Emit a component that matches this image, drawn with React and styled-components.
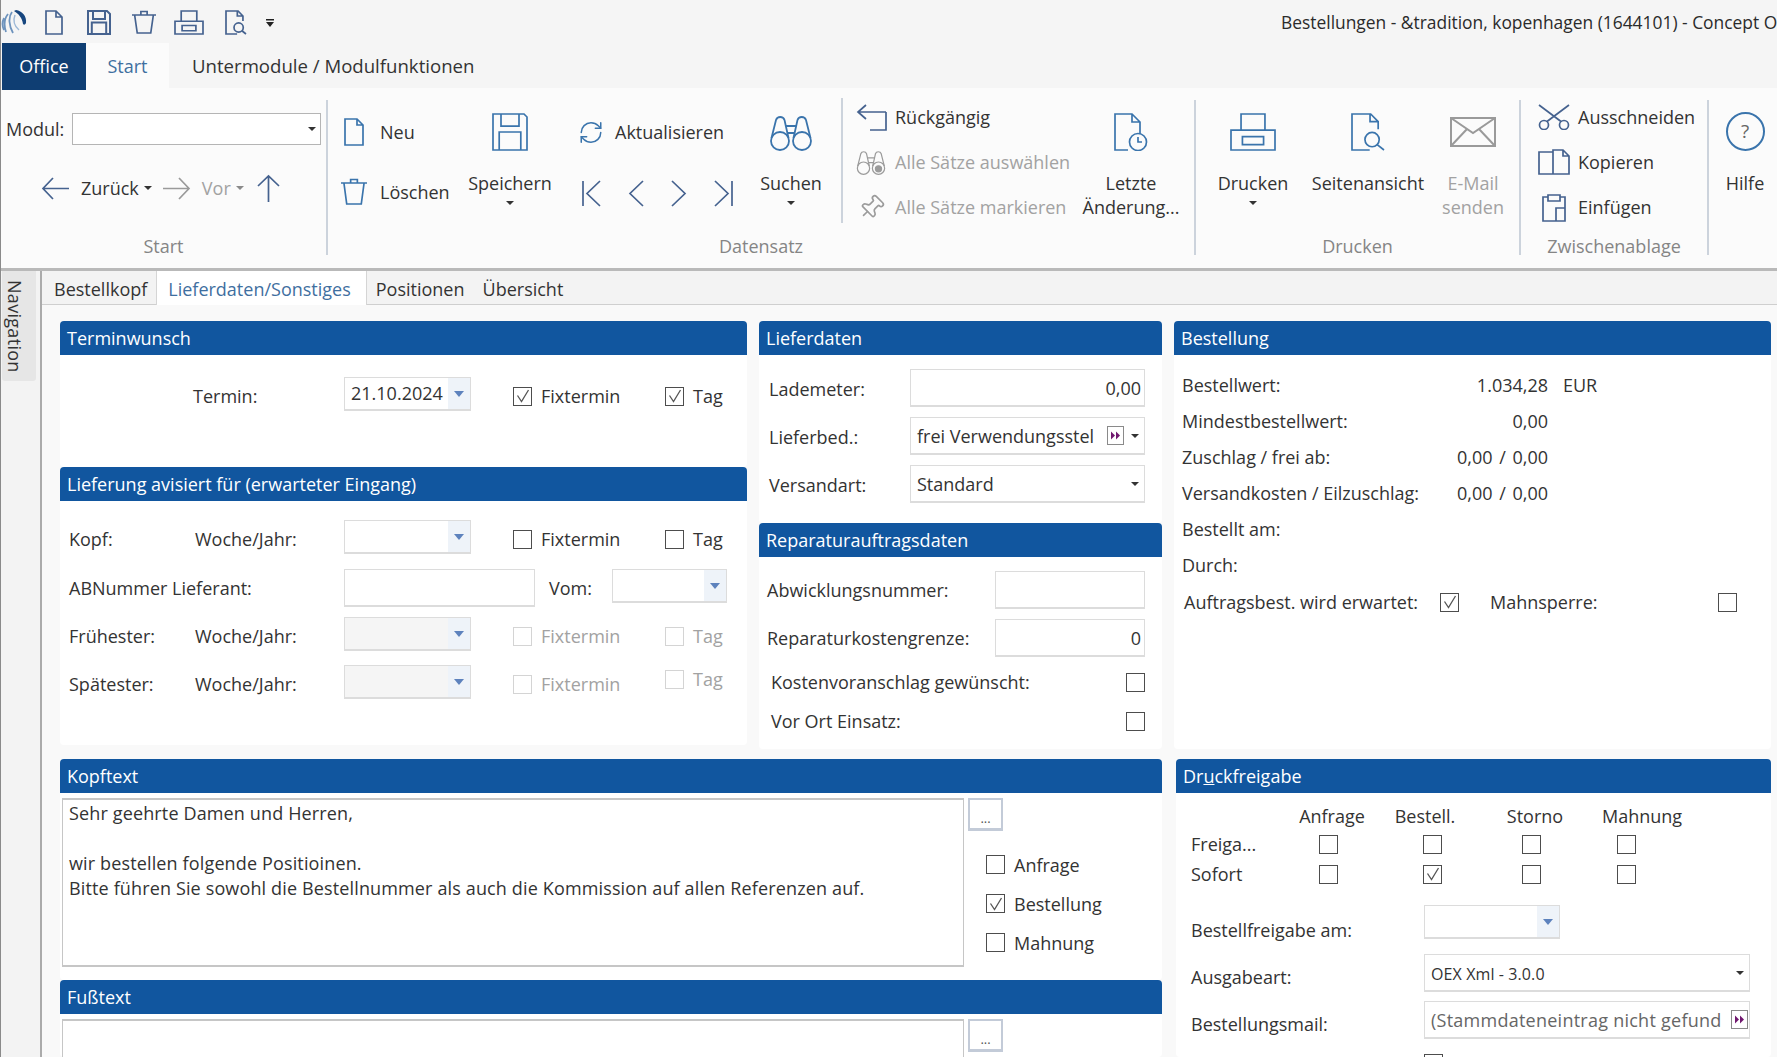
import React from 'react'
import styled, { createGlobalStyle } from 'styled-components'
import { RefreshCw, Pin } from 'lucide-react'

const BLUE = '#3a74ac'
const NAVY = '#45628f'
const GRAY = '#a2a2a2'

const Global = createGlobalStyle`
  html, body { margin: 0; padding: 0; background: #f9f9f9; overflow: hidden; }
  * { box-sizing: border-box; }
  body { font-family: "Open Sans", "Noto Sans", sans-serif; font-size: 18px; color: #333; }
`

const Screen = styled.div`
  width: 1777px;
  height: 1057px;
  overflow: hidden;
  display: flex;
  flex-direction: column;
  border-left: 1px solid #8a8a8a;
  background: #f9f9f9;
`

/* title + quick access */
const TitleBar = styled.div`
  height: 43px;
  flex: none;
  display: flex;
  background: #f5f5f5;
`
const QuickBar = styled.div`
  width: 1280px;
  flex: none;
  height: 43px;
`
const QuickIcons = styled.div`
  display: flex;
  align-items: center;
  height: 35px;
  padding-top: 10px;
  svg { display: block; flex: none; }
`
const Title = styled.div`
  flex: 1;
  white-space: nowrap;
  overflow: hidden;
  line-height: 44px;
  font-size: 17.4px;
  color: #2b2b2b;
`
const Slot = styled.span`
  display: block;
  flex: none;
  width: ${p => p.$w}px;
`

const TabStrip = styled.div`
  height: 45px;
  flex: none;
  display: flex;
  background: #f5f5f5;
`
const OfficeTab = styled.div`
  width: 84px;
  height: 47px;
  margin-left: 1px;
  position: relative;
  z-index: 1;
  background: #0f3e73;
  color: #fff;
  text-align: center;
  line-height: 46px;
`
const StartTab = styled.div`
  width: 83px;
  background: #fbfbfb;
  color: #3f6f9f;
  text-align: center;
  line-height: 46px;
`
const ModuleTab = styled.div`
  margin-left: 23px;
  line-height: 46px;
  font-size: 18.6px;
`

/* ribbon */
const Ribbon = styled.div`
  height: 183px;
  flex: none;
  display: flex;
  background: #fbfbfb;
  border-bottom: 3px solid #b9b9b9;
`
const Group = styled.div`
  width: ${p => p.$w}px;
  flex: none;
  display: flex;
  flex-direction: column;
`
const GroupBody = styled.div`
  height: 143px;
  display: flex;
`
const GroupLabel = styled.div`
  height: 30px;
  line-height: 30px;
  text-align: center;
  color: #858585;
`
const Sep = styled.div`
  width: 2px;
  flex: none;
  height: ${p => p.$h || 155}px;
  margin: ${p => p.$top || 12}px ${p => p.$right || 0}px 0 ${p => p.$left || 0}px;
  background: #ccd3dc;
`
const StartStack = styled.div`
  width: 100%;
  display: flex;
  flex-direction: column;
`
const ModulRow = styled.div`
  display: flex;
  align-items: center;
  margin-top: 25px;
  padding-left: 5px;
  height: 32px;
`
const ModulLabel = styled.span`
  width: 66px;
  overflow: hidden;
  white-space: nowrap;
`
const ModulInput = styled.div`
  width: 249px;
  height: 32px;
  background: #fff;
  border: 1px solid #b5b5b5;
  display: flex;
  align-items: center;
  justify-content: flex-end;
  padding-right: 4px;
`
const NavRow = styled.div`
  display: flex;
  align-items: center;
  height: 30px;
  margin-top: 28px;
  padding-left: 40px;
  svg { flex: none; display: block; }
`
const NavText = styled.span`
  color: ${p => (p.$off ? GRAY : '#333')};
  margin: 0 5px 0 ${p => p.$left}px;
`
const Caret = styled.span`
  display: inline-block;
  flex: none;
  width: 0;
  height: 0;
  border-left: 4px solid transparent;
  border-right: 4px solid transparent;
  border-top: 4px solid ${p => (p.$off ? '#8a8a8a' : '#333')};
  margin-right: ${p => p.$right || 0}px;
`
const Col = styled.div`
  width: ${p => p.$w}px;
  flex: none;
  display: flex;
  flex-direction: column;
  padding: ${p => p.$top || 0}px 0 0 ${p => p.$left || 0}px;
  gap: ${p => p.$gap || 0}px;
`
const SmallBtn = styled.div`
  height: 30px;
  padding-bottom: 2px;
  display: flex;
  align-items: center;
  white-space: nowrap;
  color: ${p => (p.$off ? GRAY : '#333')};
`
const IconSlot = styled.span`
  width: ${p => p.$w}px;
  flex: none;
  display: flex;
  justify-content: center;
  margin-right: ${p => p.$gap}px;
  svg { display: block; }
`
const PagerRow = styled.div`
  height: 30px;
  display: flex;
  align-items: center;
  gap: 27px;
  padding-left: 4px;
  svg { display: block; flex: none; }
`
const LargeBtn = styled.div`
  width: ${p => p.$w || 80}px;
  flex: none;
  margin-left: ${p => p.$left || 0}px;
  padding-top: 25px;
  display: flex;
  flex-direction: column;
  align-items: center;
  line-height: 24px;
  text-align: center;
  white-space: nowrap;
  color: ${p => (p.$off ? GRAY : '#333')};
`
const LargeIcon = styled.div`
  height: 37px;
  margin-bottom: 21px;
  display: flex;
  align-items: center;
  svg { display: block; }
`
const BtnCaret = styled(Caret)`
  margin-top: 6px;
`
const HelpCircle = styled.div`
  width: 39px;
  height: 39px;
  border-radius: 50%;
  border: 2px solid ${BLUE};
  color: #666;
  font-size: 19px;
  line-height: 34px;
  text-align: center;
`

/* main area */
const Main = styled.div`
  flex: 1;
  min-height: 0;
  display: flex;
`
const NavStrip = styled.div`
  width: 41px;
  flex: none;
  background: #f3f3f3;
  border-right: 2px solid #ababab;
  padding-left: 1px;
`
const NavTab = styled.div`
  width: 34px;
  height: 110px;
  background: #e6e6e6;
  border-radius: 0 0 3px 3px;
  writing-mode: vertical-rl;
  text-align: center;
  padding-right: 8px;
  line-height: 26px;
  font-size: 18px;
  letter-spacing: 0.3px;
  color: #333;
`
const Content = styled.div`
  flex: 1;
  min-width: 0;
  display: flex;
  flex-direction: column;
`
const PageTabs = styled.div`
  height: 34px;
  flex: none;
  display: flex;
  background: #f3f3f3;
  border-bottom: 1px solid #cfcfcf;
  padding-left: 3px;
`
const PageTab = styled.div`
  line-height: 36px;
  padding: 0 ${p => p.$padRight || 8}px 0 ${p => p.$pad || 8}px;
  color: ${p => (p.$active ? '#3f6f9f' : '#333')};
  background: ${p => (p.$active ? '#fff' : 'transparent')};
  height: ${p => (p.$active ? 34 : 33)}px;
  border-left: 1px solid ${p => (p.$active ? '#d5d5d5' : 'transparent')};
  border-right: 1px solid ${p => (p.$active ? '#d5d5d5' : 'transparent')};
`
const Page = styled.div`
  flex: 1;
  min-height: 0;
  padding: 16px 0 0 18px;
`
const TopRow = styled.div`
  height: 438px;
  display: flex;
  gap: 12px;
`
const Stack = styled.div`
  width: ${p => p.$w}px;
  flex: none;
`
const Panel = styled.div`
  background: #fff;
  border-radius: 4px;
  height: ${p => p.$h}px;
  margin-bottom: ${p => p.$bottom || 0}px;
`
const Head = styled.div`
  height: 34px;
  background: #11569f;
  border-radius: 4px 4px 0 0;
  color: #fff;
  line-height: 34px;
  padding-left: 7px;
  font-size: 18px;
`
const Body = styled.div`
  padding: ${p => p.$top || 0}px 0 0 ${p => p.$left || 0}px;
  display: flex;
  flex-direction: column;
`

const DateRow = styled.div`
  display: flex;
  align-items: center;
  height: ${p => p.$h || 34}px;
  margin-top: ${p => p.$top || 0}px;
`
const RowLabel = styled.span`
  width: ${p => p.$w}px;
  flex: none;
  white-space: nowrap;
  position: relative;
  top: ${p => p.$shift ?? 2}px;
  margin-left: ${p => p.$left || 0}px;
`
const Combo = styled.div`
  width: ${p => p.$w || 127}px;
  height: 34px;
  flex: none;
  align-self: ${p => (p.$top ? 'flex-start' : 'auto')};
  display: flex;
  justify-content: space-between;
  border: 1px solid #dcdcdc;
  border-bottom-width: 2px;
  background: ${p => (p.$off ? '#f5f5f5' : '#fff')};
  line-height: 30px;
  padding-left: 6px;
`
const ComboBtn = styled.span`
  width: 22px;
  background: #eef3f9;
  display: flex;
  align-items: center;
  justify-content: center;
  &::after {
    content: '';
    border-left: 5px solid transparent;
    border-right: 5px solid transparent;
    border-top: 6px solid #5d82bd;
  }
`
const CheckWrap = styled.label`
  display: flex;
  align-items: center;
  flex: none;
  height: 19px;
  width: ${p => p.$w || 'auto'};
  margin-left: ${p => p.$left || 0}px;
  position: relative;
  top: ${p => p.$shift ?? 2}px;
  color: ${p => (p.$off ? GRAY : '#333')};
`
const Box = styled.span`
  width: 19px;
  height: 19px;
  flex: none;
  display: flex;
  align-items: center;
  justify-content: center;
  background: #fff;
  border: 1.5px solid ${p => (p.$off ? '#d4d4d4' : '#4d4d4d')};
  margin-right: ${p => (p.$gap === undefined ? 9 : p.$gap)}px;
  svg { display: block; }
`
const Field = styled.div`
  width: ${p => p.$w}px;
  height: ${p => p.$h || 38}px;
  flex: none;
  display: flex;
  align-items: center;
  justify-content: ${p => (p.$right ? 'flex-end' : 'space-between')};
  border: 1px solid #dcdcdc;
  border-bottom-width: 2px;
  background: #fff;
  padding: 0 ${p => (p.$right ? 3 : p.$tight ? 1 : 5)}px 0 ${p => (p.$right ? 0 : 6)}px;
  white-space: nowrap;
  overflow: hidden;
  letter-spacing: ${p => (p.$tight ? 0.25 : 0)}px;
  color: ${p => (p.$muted ? '#666' : '#333')};
`
const FieldEnd = styled.span`
  display: flex;
  align-items: center;
  flex: none;
  gap: 7px;
  svg { display: block; }
`
const ExportValue = styled.span`
  font-size: 16px;
  letter-spacing: 0.1px;
  position: relative;
  top: 1px;
`
const FormRow = styled.div`
  display: flex;
  align-items: center;
  height: ${p => p.$h || 38}px;
  margin-top: ${p => p.$top || 0}px;
`
const FormLabel = styled.span`
  width: ${p => p.$w}px;
  flex: none;
  white-space: nowrap;
  position: relative;
  top: ${p => p.$shift || 0}px;
  padding-left: ${p => p.$pad || 0}px;
  margin-left: ${p => p.$left || 0}px;
`
const OrderRow = styled.div`
  display: grid;
  grid-template-columns: 240px 126px auto;
  height: 36px;
  line-height: 36px;
  padding-left: 8px;
  white-space: nowrap;
`
const OrderValue = styled.span`
  text-align: right;
  word-spacing: 2px;
`
const Currency = styled.span`
  margin-left: 15px;
`
const FlagRow = styled.div`
  display: flex;
  align-items: center;
  height: 38px;
  padding-left: 10px;
  white-space: nowrap;
`

const BottomRow = styled.div`
  display: flex;
  gap: 14px;
`
const TextBlock = styled.div`
  display: flex;
  padding: 5px 0 0 2px;
  height: ${p => p.$h}px;
`
const TextBox = styled.div`
  width: 902px;
  height: ${p => p.$h}px;
  flex: none;
  background: #fff;
  border: 1px solid #c6c6c6;
  border-top-width: 2px;
  border-bottom-width: 2px;
  padding: 1px 6px;
  line-height: 25px;
  letter-spacing: 0.14px;
  white-space: pre-line;
`
const SideCol = styled.div`
  margin-left: 4px;
  display: flex;
  flex-direction: column;
`
const DotsBtn = styled.div`
  width: 35px;
  height: 33px;
  background: #fff;
  border: 2px solid #c3cbd8;
  border-bottom-width: 3px;
  font-size: 13px;
  line-height: 36px;
  text-align: center;
  color: #555;
`
const SideChecks = styled.div`
  display: flex;
  flex-direction: column;
  gap: 20px;
  padding: 24px 0 0 18px;
`
const ReleaseHead = styled.div`
  display: grid;
  grid-template-columns: 94px 92px 128px 86px;
  height: 26px;
  margin: 10px 0 0 109px;
  line-height: 26px;
  text-align: center;
`
const ReleaseRow = styled.div`
  display: grid;
  grid-template-columns: 128px 104px 99px 95px 20px;
  align-items: center;
  height: 30px;
  padding-left: 15px;
`
const ReleaseForm = styled.div`
  padding: 16px 0 0 15px;
`

const Check = () => (
  <svg width="14" height="14" viewBox="0 0 14 14" fill="none" stroke="#555" strokeWidth="1.3"><path d="M1.500 6.500l4 6L12.500 1" /></svg>
)
const CheckBox = ({ on, off, children, w, left, shift, gap }) => (
  <CheckWrap $w={w} $left={left} $shift={shift} $off={off}>
    <Box $off={off} $gap={children ? gap : 0}>{on && <Check />}</Box>
    {children}
  </CheckWrap>
)

const Ico = ({ w, h, c = BLUE, sw = 1.7, children }) => (
  <svg width={w} height={h} viewBox={`0 0 ${w} ${h}`} fill="none" stroke={c} strokeWidth={sw}>{children}</svg>
)
const Logo = () => (
  <svg width="27" height="27" viewBox="0 0 27 27" fill="none">
    <path d="M15 1c6 1 11 6 10 13-1 2-2 2-3 1-1-6-4-10-9-13z" fill="#17467f" />
    <path d="M11 3c-4 5-3 14 1 21M7 5c-4 5-4 12-2 18M3 9c-2 4-2 8 0 12" stroke="#6d93bd" strokeWidth="1.8" />
    <path d="M14 6c-2 5-1 11 4 15" stroke="#9db8d6" strokeWidth="1.500" />
  </svg>
)
const DocIco = ({ w = 20, h = 28, c = BLUE, sw }) => (
  <Ico w={w} h={h} c={c} sw={sw}><path d={`M1 1h${w - 8}l6 6v${h - 8}H1z M${w - 7} 1v6h6`} /></Ico>
)
const SaveIco = ({ w = 36, h = 38, c = BLUE, sw }) => (
  <Ico w={w} h={h} c={c} sw={sw}><path d={`M1 1h${w - 5}l3 3v${h - 5}H1z M${w * 0.25} 1v${h * 0.32}h${w * 0.5}V1 M${w * 0.2} ${h - 1}V${h * 0.5}h${w * 0.6}V${h - 1}`} /></Ico>
)
const TrashIco = ({ w = 28, h = 28, c = BLUE, sw }) => (
  <Ico w={w} h={h} c={c} sw={sw}><path d={`M1 5h${w - 2} M${w * 0.14} 5l${w * 0.1} ${h - 7}h${w * 0.52}l${w * 0.1} ${-(h - 7)} M${w * 0.38} 5V1.500h${w * 0.24}V5`} /></Ico>
)
const PrintIco = ({ w = 46, h = 38, c = BLUE, sw }) => (
  <Ico w={w} h={h} c={c} sw={sw}><path d={`M${w * 0.24} ${h * 0.45}V1h${w * 0.52}v${h * 0.45 - 1} M1 ${h * 0.45}h${w - 2}v${h * 0.55 - 1}H1z M${w * 0.27} ${h * 0.62}h${w * 0.46}v${h * 0.21}h${-w * 0.46}z`} /></Ico>
)
const PreviewIco = ({ w = 34, h = 38, c = BLUE, sw }) => (
  <Ico w={w} h={h} c={c} sw={sw}>
    <path d={`M${w * 0.55} ${h - 1}H1V1h${w * 0.55}l${w * 0.22} ${h * 0.2}v${h * 0.2} M${w * 0.56} 1v${h * 0.2}h${w * 0.22}`} />
    <circle cx={w * 0.62} cy={h * 0.7} r={w * 0.21} />
    <path d={`M${w * 0.77} ${h * 0.83}L${w - 1} ${h - 1}`} />
  </Ico>
)
const BinocularIco = ({ w = 44, h = 38, c = BLUE, badge }) => (
  <svg width={w} height={h} viewBox="0 0 44 38" fill="none" stroke={c} strokeWidth={1.8}>
    <circle cx="11" cy="28" r="9" />
    <circle cx="33" cy="28" r="9" />
    <path d="M2.500 25L7 7a4.500 4.500 0 0 1 8.500 0L19.500 25 M24.500 25l4-18a4.500 4.500 0 0 1 8.500 0l4.500 18 M17 13h10 M19 20h6" />
    {badge && <circle cx="33" cy="29" r="4.500" fill={c} />}
  </svg>
)
const ClockDocIco = () => (
  <Ico w={34} h={38}>
    <path d="M14 37H1V1h17l8 8v12 M18 1v8h8" />
    <circle cx="24" cy="29" r="8.500" />
    <path d="M24 24v5h4" />
  </Ico>
)
const MailIco = () => (
  <Ico w={46} h={30} c="#9a9a9a" sw={2}><path d="M1 1h44v28H1z M1 1l22 15L45 1 M1 29l16-17 M45 29L29 12" /></Ico>
)
const UndoIco = () => (
  <Ico w={31} h={27} c={NAVY}><path d="M30 8H2 M10 1L2 8l8 7 M30 8v18H14" /></Ico>
)
const ScissorsIco = () => (
  <Ico w={32} h={26} c={NAVY}>
    <circle cx="6" cy="21" r="4.500" /><circle cx="26" cy="21" r="4.500" />
    <path d="M9 17.500L31 1 M23 17.500L1 1" />
  </Ico>
)
const CopyIco = () => (
  <Ico w={32} h={26} c={NAVY}><path d="M15 3H1v22h14 M15 1h10l6 6v18H15z M25 1v6h6" /></Ico>
)
const PasteIco = () => (
  <Ico w={25} h={29} c={NAVY}><path d="M6 4H1v24h13 M18 4h5v11 M6 2h12v6H6z M14 15h9v13h-9z" /></Ico>
)
const ArrowLeft = ({ c = NAVY }) => (
  <Ico w={29} h={25} c={c}><path d="M28 12.500H2 M12 2L2 12.500 12 23" /></Ico>
)
const ArrowRight = () => (
  <Ico w={29} h={25} c="#9a9a9a"><path d="M1 12.500h26 M17 2l10 10.500L17 23" /></Ico>
)
const ArrowUp = () => (
  <Ico w={25} h={29} c={NAVY}><path d="M12.500 28V2 M2 12L12.500 2 23 12" /></Ico>
)
const First = () => <Ico w={19} h={27} c={NAVY}><path d="M1 1v25 M18 1L5 13.500 18 26" /></Ico>
const Prev = () => <Ico w={16} h={27} c={NAVY}><path d="M15 1L2 13.500 15 26" /></Ico>
const Next = () => <Ico w={16} h={27} c={NAVY}><path d="M1 1l13 12.500L1 26" /></Ico>
const Last = () => <Ico w={19} h={27} c={NAVY}><path d="M1 1l13 12.500L1 26 M18 1v25" /></Ico>
const LookupBtn = () => (
  <svg width="17" height="19" viewBox="0 0 17 19">
    <rect x="0.500" y="0.500" width="16" height="18" fill="#fff" stroke="#8a8a8a" />
    <path d="M4 5.500l4 4-4 4z M9 5.500l4 4-4 4z" fill="#70186f" />
  </svg>
)
const OverflowMark = () => (
  <svg width="10" height="10" viewBox="0 0 10 10"><path d="M1 1h8v1.500H1z M1 4h8L5 9z" fill="#222" /></svg>
)

export default function App() {
  return (
    <Screen>
      <Global />
      <TitleBar>
        <QuickBar>
          <QuickIcons>
            <Logo />
            <Slot $w={17} />
            <DocIco w={18} h={25} c={NAVY} />
            <Slot $w={24} />
            <SaveIco w={24} h={25} c={NAVY} sw={2} />
            <Slot $w={20} />
            <TrashIco w={26} h={25} c={NAVY} />
            <Slot $w={17} />
            <PrintIco w={30} h={25} c={NAVY} />
            <Slot $w={21} />
            <PreviewIco w={22} h={25} c={NAVY} />
            <Slot $w={18} />
            <OverflowMark />
          </QuickIcons>
        </QuickBar>
        <Title>Bestellungen - &amp;tradition, kopenhagen (1644101) - Concept Office</Title>
      </TitleBar>
      <TabStrip>
        <OfficeTab>Office</OfficeTab>
        <StartTab>Start</StartTab>
        <ModuleTab>Untermodule / Modulfunktionen</ModuleTab>
      </TabStrip>
      <Ribbon>
        <Group $w={325}>
          <GroupBody>
            <StartStack>
              <ModulRow>
                <ModulLabel>Modul:</ModulLabel>
                <ModulInput><Caret /></ModulInput>
              </ModulRow>
              <NavRow>
                <ArrowLeft />
                <NavText $left={11}>Zurück</NavText>
                <Caret $right={10} />
                <ArrowRight />
                <NavText $left={11} $off>Vor</NavText>
                <Caret $off $right={12} />
                <ArrowUp />
              </NavRow>
            </StartStack>
          </GroupBody>
          <GroupLabel>Start</GroupLabel>
        </Group>
        <Sep />
        <Group $w={866}>
          <GroupBody>
            <Col $w={142} $top={30} $left={12} $gap={30}>
              <SmallBtn><IconSlot $w={28} $gap={12}><DocIco /></IconSlot>Neu</SmallBtn>
              <SmallBtn><IconSlot $w={28} $gap={12}><TrashIco /></IconSlot>Löschen</SmallBtn>
            </Col>
            <LargeBtn>
              <LargeIcon><SaveIco /></LargeIcon>
              Speichern
              <BtnCaret />
            </LargeBtn>
            <Col $w={201} $top={30} $left={28} $gap={30}>
              <SmallBtn>
                <IconSlot $w={26} $gap={11}><RefreshCw size={27} color={BLUE} strokeWidth={1.4} /></IconSlot>
                Aktualisieren
              </SmallBtn>
              <PagerRow><First /><Prev /><Next /><Last /></PagerRow>
            </Col>
            <LargeBtn>
              <LargeIcon><BinocularIco /></LargeIcon>
              Suchen
              <BtnCaret />
            </LargeBtn>
            <Sep $top={10} $h={125} $left={10} />
            <Col $w={247} $top={15} $left={12} $gap={15}>
              <SmallBtn><IconSlot $w={32} $gap={8}><UndoIco /></IconSlot>Rückgängig</SmallBtn>
              <SmallBtn $off><IconSlot $w={32} $gap={8}><BinocularIco w={30} h={26} c="#9b9b9b" badge /></IconSlot>Alle Sätze auswählen</SmallBtn>
              <SmallBtn $off><IconSlot $w={32} $gap={8}><Pin size={27} color="#9b9b9b" strokeWidth={1.5} style={{ transform: 'rotate(45deg)' }} /></IconSlot>Alle Sätze markieren</SmallBtn>
            </Col>
            <LargeBtn $w={82}>
              <LargeIcon><ClockDocIco /></LargeIcon>
              Letzte
              <br />
              Änderung...
            </LargeBtn>
          </GroupBody>
          <GroupLabel>Datensatz</GroupLabel>
        </Group>
        <Sep />
        <Group $w={323}>
          <GroupBody>
            <LargeBtn $left={17}>
              <LargeIcon><PrintIco /></LargeIcon>
              Drucken
              <BtnCaret />
            </LargeBtn>
            <LargeBtn $w={110} $left={20}>
              <LargeIcon><PreviewIco /></LargeIcon>
              Seitenansicht
            </LargeBtn>
            <LargeBtn $left={10} $off>
              <LargeIcon><MailIco /></LargeIcon>
              E-Mail
              <br />
              senden
            </LargeBtn>
          </GroupBody>
          <GroupLabel>Drucken</GroupLabel>
        </Group>
        <Sep />
        <Group $w={186}>
          <GroupBody>
            <Col $w={186} $top={15} $left={17} $gap={15}>
              <SmallBtn><IconSlot $w={32} $gap={8}><ScissorsIco /></IconSlot>Ausschneiden</SmallBtn>
              <SmallBtn><IconSlot $w={32} $gap={8}><CopyIco /></IconSlot>Kopieren</SmallBtn>
              <SmallBtn><IconSlot $w={32} $gap={8}><PasteIco /></IconSlot>Einfügen</SmallBtn>
            </Col>
          </GroupBody>
          <GroupLabel>Zwischenablage</GroupLabel>
        </Group>
        <Sep />
        <LargeBtn $w={72}>
          <LargeIcon><HelpCircle>?</HelpCircle></LargeIcon>
          Hilfe
        </LargeBtn>
      </Ribbon>
      <Main>
        <NavStrip><NavTab>Navigation</NavTab></NavStrip>
        <Content>
          <PageTabs>
            <PageTab>Bestellkopf</PageTab>
            <PageTab $active $pad={11} $padRight={15}>Lieferdaten/Sonstiges</PageTab>
            <PageTab>Positionen</PageTab>
            <PageTab>Übersicht</PageTab>
          </PageTabs>
          <Page>
            <TopRow>
              <Stack $w={687}>
                <Panel $h={146}>
                  <Head>Terminwunsch</Head>
                  <Body $top={22} $left={133}>
                    <DateRow>
                      <RowLabel $w={151}>Termin:</RowLabel>
                      <Combo>21.10.2024<ComboBtn /></Combo>
                      <CheckBox on left={42} w="152px">Fixtermin</CheckBox>
                      <CheckBox on>Tag</CheckBox>
                    </DateRow>
                  </Body>
                </Panel>
                <Panel $h={278}>
                  <Head>Lieferung avisiert für (erwarteter Eingang)</Head>
                  <Body $top={19} $left={9}>
                    <DateRow>
                      <RowLabel $w={126}>Kopf:</RowLabel>
                      <RowLabel $w={149}>Woche/Jahr:</RowLabel>
                      <Combo><span /><ComboBtn /></Combo>
                      <CheckBox left={42} w="152px">Fixtermin</CheckBox>
                      <CheckBox>Tag</CheckBox>
                    </DateRow>
                    <DateRow $h={38} $top={15}>
                      <RowLabel $w={275} $shift={0}>ABNummer Lieferant:</RowLabel>
                      <Field $w={191} />
                      <RowLabel $w={63} $shift={0} $left={14}>Vom:</RowLabel>
                      <Combo $w={115} $top><span /><ComboBtn /></Combo>
                    </DateRow>
                    <DateRow $top={10}>
                      <RowLabel $w={126}>Frühester:</RowLabel>
                      <RowLabel $w={149}>Woche/Jahr:</RowLabel>
                      <Combo $off><span /><ComboBtn /></Combo>
                      <CheckBox off left={42} w="152px">Fixtermin</CheckBox>
                      <CheckBox off>Tag</CheckBox>
                    </DateRow>
                    <DateRow $top={14}>
                      <RowLabel $w={126}>Spätester:</RowLabel>
                      <RowLabel $w={149}>Woche/Jahr:</RowLabel>
                      <Combo $off><span /><ComboBtn /></Combo>
                      <CheckBox off left={42} w="152px">Fixtermin</CheckBox>
                      <CheckBox off shift={-3}>Tag</CheckBox>
                    </DateRow>
                  </Body>
                </Panel>
              </Stack>
              <Stack $w={403}>
                <Panel $h={202}>
                  <Head>Lieferdaten</Head>
                  <Body $top={14} $left={10}>
                    <FormRow>
                      <FormLabel $w={141} $shift={1}>Lademeter:</FormLabel>
                      <Field $w={235} $right>0,00</Field>
                    </FormRow>
                    <FormRow $top={10}>
                      <FormLabel $w={141} $shift={1}>Lieferbed.:</FormLabel>
                      <Field $w={235}>
                        frei Verwendungsstel
                        <FieldEnd><LookupBtn /><Caret /></FieldEnd>
                      </Field>
                    </FormRow>
                    <FormRow $top={10}>
                      <FormLabel $w={141} $shift={1}>Versandart:</FormLabel>
                      <Field $w={235}>Standard<FieldEnd><Caret /></FieldEnd></Field>
                    </FormRow>
                  </Body>
                </Panel>
                <Panel $h={226}>
                  <Head>Reparaturauftragsdaten</Head>
                  <Body $top={14} $left={8}>
                    <FormRow>
                      <FormLabel $w={228}>Abwicklungsnummer:</FormLabel>
                      <Field $w={150} />
                    </FormRow>
                    <FormRow $top={10}>
                      <FormLabel $w={228}>Reparaturkostengrenze:</FormLabel>
                      <Field $w={150} $right>0</Field>
                    </FormRow>
                    <FormRow $h={30} $top={10}>
                      <FormLabel $w={359} $pad={4}>Kostenvoranschlag gewünscht:</FormLabel>
                      <CheckBox shift={0} />
                    </FormRow>
                    <FormRow $h={30} $top={9}>
                      <FormLabel $w={359} $pad={4}>Vor Ort Einsatz:</FormLabel>
                      <CheckBox shift={0} />
                    </FormRow>
                  </Body>
                </Panel>
              </Stack>
              <Stack $w={597}>
                <Panel $h={428}>
                  <Head>Bestellung</Head>
                  <Body $top={12}>
                    <OrderRow><span>Bestellwert:</span><OrderValue>1.034,28</OrderValue><Currency>EUR</Currency></OrderRow>
                    <OrderRow><span>Mindestbestellwert:</span><OrderValue>0,00</OrderValue></OrderRow>
                    <OrderRow><span>Zuschlag / frei ab:</span><OrderValue>0,00 / 0,00</OrderValue></OrderRow>
                    <OrderRow><span>Versandkosten / Eilzuschlag:</span><OrderValue>0,00 / 0,00</OrderValue></OrderRow>
                    <OrderRow><span>Bestellt am:</span></OrderRow>
                    <OrderRow><span>Durch:</span></OrderRow>
                    <FlagRow>
                      <FormLabel $w={256}>Auftragsbest. wird erwartet:</FormLabel>
                      <CheckBox on shift={0} />
                      <FormLabel $w={228} $left={31}>Mahnsperre:</FormLabel>
                      <CheckBox shift={0} />
                    </FlagRow>
                  </Body>
                </Panel>
              </Stack>
            </TopRow>
            <BottomRow>
              <Stack $w={1102}>
                <Panel $h={221}>
                  <Head>Kopftext</Head>
                  <TextBlock $h={187}>
                    <TextBox $h={169}>{'Sehr geehrte Damen und Herren,\n\nwir bestellen folgende Positioinen.\nBitte führen Sie sowohl die Bestellnummer als auch die Kommission auf allen Referenzen auf.'}</TextBox>
                    <SideCol>
                      <DotsBtn>...</DotsBtn>
                      <SideChecks>
                        <CheckBox shift={0}>Anfrage</CheckBox>
                        <CheckBox on shift={0}>Bestellung</CheckBox>
                        <CheckBox shift={0}>Mahnung</CheckBox>
                      </SideChecks>
                    </SideCol>
                  </TextBlock>
                </Panel>
                <Panel $h={77}>
                  <Head>Fußtext</Head>
                  <TextBlock $h={43}>
                    <TextBox $h={60} />
                    <SideCol><DotsBtn>...</DotsBtn></SideCol>
                  </TextBlock>
                </Panel>
              </Stack>
              <Stack $w={595}>
                <Panel $h={298}>
                  <Head>Dr<u>u</u>ckfreigabe</Head>
                  <ReleaseHead>
                    <span>Anfrage</span>
                    <span>Bestell.</span>
                    <span>Storno</span>
                    <span>Mahnung</span>
                  </ReleaseHead>
                  <ReleaseRow>
                    <span>Freiga...</span>
                    <CheckBox shift={0} /><CheckBox shift={0} /><CheckBox shift={0} /><CheckBox shift={0} />
                  </ReleaseRow>
                  <ReleaseRow>
                    <span>Sofort</span>
                    <CheckBox shift={0} /><CheckBox on shift={0} /><CheckBox shift={0} /><CheckBox shift={0} />
                  </ReleaseRow>
                  <ReleaseForm>
                    <FormRow $h={34}>
                      <FormLabel $w={233} $shift={8}>Bestellfreigabe am:</FormLabel>
                      <Combo $w={136}><span /><ComboBtn /></Combo>
                    </FormRow>
                    <FormRow $top={15}>
                      <FormLabel $w={233} $shift={4}>Ausgabeart:</FormLabel>
                      <Field $w={326}><ExportValue>OEX Xml - 3.0.0</ExportValue><FieldEnd><Caret /></FieldEnd></Field>
                    </FormRow>
                    <FormRow $top={9}>
                      <FormLabel $w={233} $shift={4}>Bestellungsmail:</FormLabel>
                      <Field $w={326} $muted $tight>(Stammdateneintrag nicht gefund<FieldEnd><LookupBtn /></FieldEnd></Field>
                    </FormRow>
                    <FormRow $h={20} $top={14}>
                      <FormLabel $w={233} />
                      <CheckBox shift={0} />
                    </FormRow>
                  </ReleaseForm>
                </Panel>
              </Stack>
            </BottomRow>
          </Page>
        </Content>
      </Main>
    </Screen>
  )
}
